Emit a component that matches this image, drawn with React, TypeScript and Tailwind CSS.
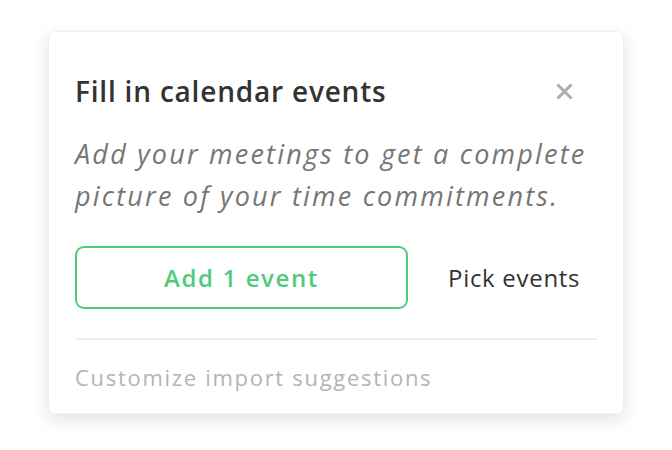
import React from "react";

export default function App() {
  return (
    <div className="min-h-[450px] w-[672px] bg-white pl-[48px] pt-[31px]" style={{ fontFamily: "'Open Sans', sans-serif" }}>
      <div className="w-[576px] rounded-[7px] border border-[#f0f0f0] bg-white pl-[26px] pr-[25px] pt-[41px] pb-[21px] shadow-[0_6px_18px_rgba(0,0,0,0.12)]">
        <div className="flex h-[36px] items-center justify-between">
          <div className="text-[28px] font-semibold leading-[36px] tracking-[0.8px] text-[#333333]">Fill in calendar events</div>
          <svg width="17" height="17" viewBox="0 0 17 17" className="mr-[25px]">
            <path d="M1.5 1.5 L15.5 15.5 M15.5 1.5 L1.5 15.5" stroke="#acacac" strokeWidth="3" strokeLinecap="butt" />
          </svg>
        </div>
        <p className="mt-[24px] text-[27px] italic leading-[42px] tracking-[2.2px] text-[#767676]">
          Add your meetings to get a complete<br />picture of your time commitments.
        </p>
        <div className="mt-[29px] flex items-center">
          <button className="flex h-[63px] w-[333px] items-center justify-center rounded-[9px] border-2 border-[#4fcb7b] text-[24px] font-semibold tracking-[1.6px] text-[#4fcb7b]">
            Add 1 event
          </button>
          <div className="ml-[40px] text-[24px] tracking-[0.7px] text-[#333333]">Pick events</div>
        </div>
        <div className="mt-[29px] h-[2px] bg-[#f0f0f0]" />
        <div className="mt-[22px] text-[22px] leading-[30px] tracking-[1.7px] text-[#b4b4b4]">Customize import suggestions</div>
      </div>
    </div>
  );
}
